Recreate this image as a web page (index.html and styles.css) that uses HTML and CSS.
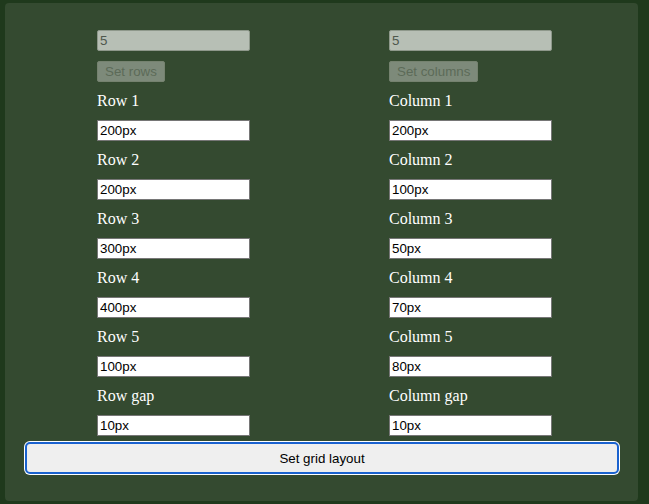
FILE: index.html
```html
<!DOCTYPE html>
<html>
<head>
<meta charset="utf-8">
<link rel="stylesheet" href="styles.css">
</head>
<body>
<div class="panel">
  <div class="columns">
    <div class="col col-rows">
      <input class="field count" type="text" value="5" disabled>
      <button class="small-btn" disabled>Set rows</button>
      <label class="lbl">Row 1</label>
      <input class="field" type="text" value="200px">
      <label class="lbl">Row 2</label>
      <input class="field" type="text" value="200px">
      <label class="lbl">Row 3</label>
      <input class="field" type="text" value="300px">
      <label class="lbl">Row 4</label>
      <input class="field" type="text" value="400px">
      <label class="lbl">Row 5</label>
      <input class="field" type="text" value="100px">
      <label class="lbl">Row gap</label>
      <input class="field" type="text" value="10px">
    </div>
    <div class="col col-cols">
      <input class="field count" type="text" value="5" disabled>
      <button class="small-btn" disabled>Set columns</button>
      <label class="lbl">Column 1</label>
      <input class="field" type="text" value="200px">
      <label class="lbl">Column 2</label>
      <input class="field" type="text" value="100px">
      <label class="lbl">Column 3</label>
      <input class="field" type="text" value="50px">
      <label class="lbl">Column 4</label>
      <input class="field" type="text" value="70px">
      <label class="lbl">Column 5</label>
      <input class="field" type="text" value="80px">
      <label class="lbl">Column gap</label>
      <input class="field" type="text" value="10px">
    </div>
  </div>
  <button class="main-btn">Set grid layout</button>
</div>
</body>
</html>
```

FILE: styles.css
```css
html, body {
  margin: 0;
  padding: 0;
  background: #1f391c;
}
body {
  padding: 3px 11px 3px 5px;
}
.panel {
  background: #344a30;
  border-radius: 4px;
  padding: 27px 19px 27px 20px;
}
.columns {
  display: grid;
  grid-template-columns: 292px auto;
  padding-left: 72px;
}
.col {
  display: flex;
  flex-direction: column;
  align-items: flex-start;
  gap: 10px;
}
.lbl {
  font-family: "Liberation Serif", "Times New Roman", serif;
  font-size: 16px;
  line-height: 18px;
  height: 18px;
  color: #ffffff;
}
.field {
  box-sizing: border-box;
  height: 21px;
  width: 153px;
  margin: 0;
  padding: 1px 2px;
  border: 1px solid #767676;
  border-radius: 0;
  background: #ffffff;
  color: #000000;
  font-family: "Liberation Sans", Arial, sans-serif;
  font-size: 13.33px;
  outline: none;
}
.col-cols .field {
  width: 163px;
}
.field.count {
  background: #b7bfb5;
  border-color: #8e988b;
  border-radius: 2px;
  color: #4f584d;
}
.small-btn {
  box-sizing: border-box;
  height: 21px;
  margin: 0;
  padding: 1px 7px;
  border: 1px solid #75826f;
  border-radius: 2px;
  background: #7d8a7a;
  color: #5c6a58;
  font-family: "Liberation Sans", Arial, sans-serif;
  font-size: 13.33px;
}
.main-btn {
  display: block;
  box-sizing: border-box;
  width: 594px;
  height: 32px;
  margin: 6px 0 0 0;
  padding: 0;
  border: 2px solid #1a62cf;
  border-radius: 5px;
  box-shadow: 0 0 0 1px #ffffff;
  background: #efefef;
  color: #000000;
  font-family: "Liberation Sans", Arial, sans-serif;
  font-size: 13.33px;
}
```
